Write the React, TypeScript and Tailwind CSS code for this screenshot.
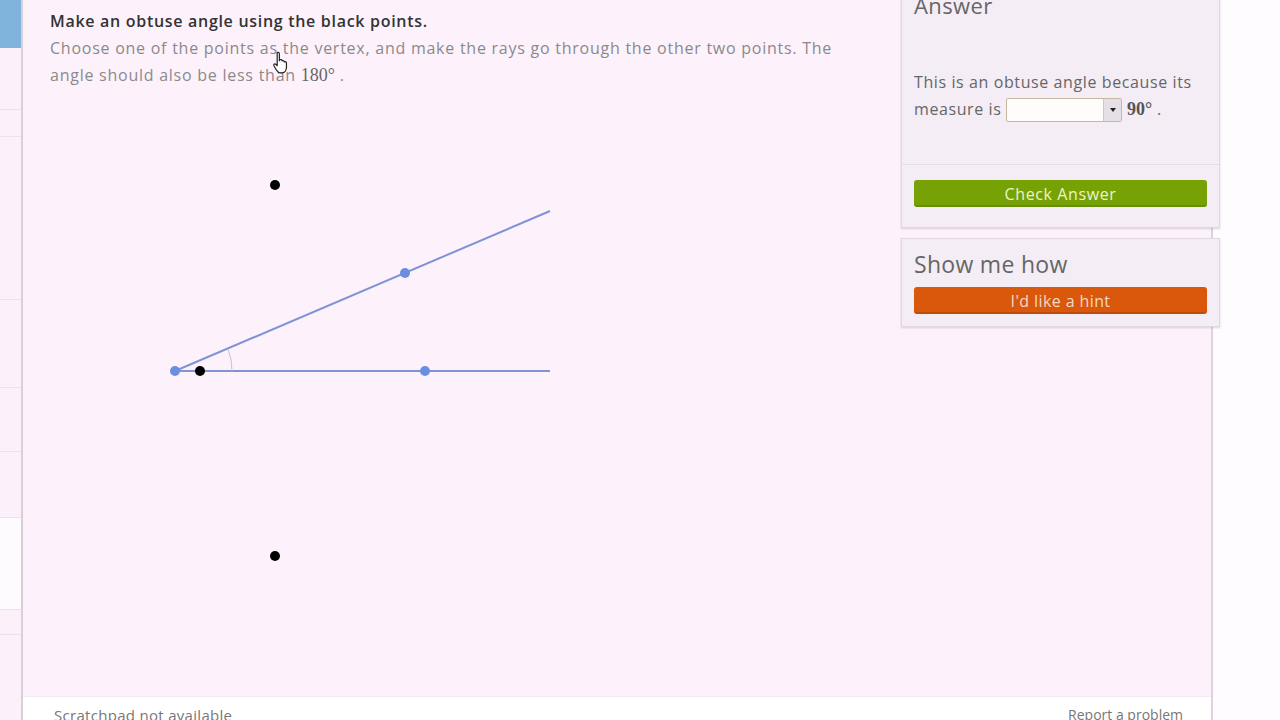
import React from 'react'

const font = { fontFamily: '"Open Sans", Lato, sans-serif' }
const serif = { fontFamily: '"Liberation Serif", serif' }

function Sidebar() {
  // faint row separators of the exercise list that is mostly hidden
  return (
    <div className="w-[23px] shrink-0 flex flex-col bg-[#fcf1fb] border-r-2 border-[#d9cfd9]">
      <div className="h-[48px] bg-[#80b4dc]" />
      <div className="h-[62px] border-b border-[#ece2ec]" />
      <div className="h-[27px] border-b border-[#ece2ec]" />
      <div className="h-[163px] border-b border-[#ece2ec]" />
      <div className="h-[88px] border-b border-[#ece2ec]" />
      <div className="h-[64px] border-b border-[#ece2ec]" />
      <div className="h-[66px] border-b border-[#ece2ec]" />
      <div className="h-[92px] border-b border-[#ece2ec] bg-[#fefbfe]" />
      <div className="h-[25px] border-b border-[#ece2ec]" />
      <div className="flex-1" />
    </div>
  )
}

function Graph() {
  return (
    <svg width="620" height="500" viewBox="0 110 620 500" className="block">
      <line x1="175" y1="371" x2="550" y2="211" stroke="#7f93d6" strokeWidth="2" />
      <line x1="175" y1="371" x2="550" y2="371" stroke="#7f93d6" strokeWidth="2" />
      <path d="M 228 349 A 57 57 0 0 1 232 371" fill="none" stroke="#c9c1cc" strokeWidth="1" />
      <circle cx="275" cy="185" r="5" fill="#000" />
      <circle cx="275" cy="556" r="5" fill="#000" />
      <circle cx="175" cy="371" r="5" fill="#6b8fe0" />
      <circle cx="200" cy="371" r="5" fill="#000" />
      <circle cx="405" cy="273" r="5" fill="#6b8fe0" />
      <circle cx="425" cy="371" r="5" fill="#6b8fe0" />
    </svg>
  )
}

function HandCursor() {
  return (
    <svg width="18" height="24" viewBox="0 0 16 22" className="absolute left-[249px] top-[51px] pointer-events-none">
      <path
        d="M4.5 1.5 C5.5 1 6.5 1.5 6.5 2.5 L6.5 9 L7 8 C8 7.5 9 8 9 9 C10 8.5 11 9 11 10 C12 9.5 13 10 13 11 L13 15 C13 17.5 11.5 20 9 20 L7.5 20 C5.5 20 4.5 18.5 3.5 17 L1.5 13.5 C1 12.5 2 11.5 3 12 L4.5 13.5 Z"
        fill="#fff"
        stroke="#222"
        strokeWidth="1.1"
        strokeLinejoin="round"
      />
    </svg>
  )
}

function AnswerPanel() {
  return (
    <div className="w-[319px] shrink-0 -mt-[12px] -mr-[9px] flex flex-col gap-[10px]">
      <div className="bg-[#f4edf5] border border-[#e0d8e0] shadow-[0_1px_2px_rgba(0,0,0,0.15)] px-[12px] pt-[1px] pb-[20px]">
        <div className="text-[22px] text-[#666] leading-[30px] tracking-[0.4px]">Answer</div>
        <div className="mt-[49px] text-[16px] text-[#666] leading-[27px] tracking-[0.6px] whitespace-nowrap">
          This is an obtuse angle because its
          <br />
          measure is{' '}
          <span className="inline-flex align-middle h-[24px] w-[116px] border border-[#c9b89c] bg-[#fffdfc] rounded-[2px] relative -top-[1px]">
            <span className="flex-1" />
            <span className="w-[18px] bg-[#e4e0e6] border-l border-[#cfc7cf] flex items-center justify-center">
              <span className="w-0 h-0 border-l-[3px] border-r-[3px] border-t-[4px] border-l-transparent border-r-transparent border-t-[#222]" />
            </span>
          </span>{' '}
          <span className="text-[18px] text-[#555] font-bold tracking-normal" style={serif}>90°</span> .
        </div>
        <div className="mt-[41px] border-t border-[#e6dde6] -mx-[12px]" />
        <button className="mt-[15px] w-full h-[27px] rounded-[3px] bg-[#77a206] text-[16px] tracking-[0.6px] text-[#e9f5c9] shadow-[inset_0_-2px_0_rgba(0,0,0,0.12)]">
          Check Answer
        </button>
      </div>
      <div className="bg-[#f4edf5] border border-[#e0d8e0] shadow-[0_1px_2px_rgba(0,0,0,0.15)] px-[12px] pt-[10px] pb-[12px]">
        <div className="text-[23px] text-[#666] leading-[30px] tracking-[0.3px]">Show me how</div>
        <button className="mt-[8px] w-full h-[27px] rounded-[3px] bg-[#d9580b] text-[16px] tracking-[0.4px] text-[#f6d9c4] shadow-[inset_0_-2px_0_rgba(0,0,0,0.12)]">
          I'd like a hint
        </button>
      </div>
    </div>
  )
}

export default function App() {
  return (
    <div className="w-[1280px] h-[720px] overflow-hidden flex bg-[#fefcfe]" style={font}>
      <Sidebar />
      <div className="w-[1190px] shrink-0 flex flex-col bg-[#fdf2fc] border-r-2 border-[#ddd3dd]">
        <div className="flex-1 flex">
          <div className="flex-1 pl-[27px] pt-[8px] relative">
            <div className="text-[16px] leading-[27px] text-[#333] font-semibold tracking-[0.7px] whitespace-nowrap">
              Make an obtuse angle using the black points.
            </div>
            <div className="text-[16px] leading-[27px] text-[#8a8a8a] tracking-[0.75px] whitespace-nowrap">
              Choose one of the points as the vertex, and make the rays go through the other two points. The
              <br />
              angle should also be less than{' '}
              <span className="text-[18px] text-[#666] tracking-normal" style={serif}>180°</span> .
            </div>
            <div className="-ml-[50px] mt-[21px]">
              <Graph />
            </div>
            <HandCursor />
          </div>
          <AnswerPanel />
        </div>
        <div className="h-[24px] bg-white border-t border-[#f3eaf3] flex justify-between items-start pl-[31px] pr-[28px] pt-[9px] text-[#777] leading-[18px]">
          <span className="text-[15px] tracking-[0.3px]">Scratchpad not available</span>
          <span className="text-[14px]">Report a problem</span>
        </div>
      </div>
      <div className="flex-1" />
    </div>
  )
}
